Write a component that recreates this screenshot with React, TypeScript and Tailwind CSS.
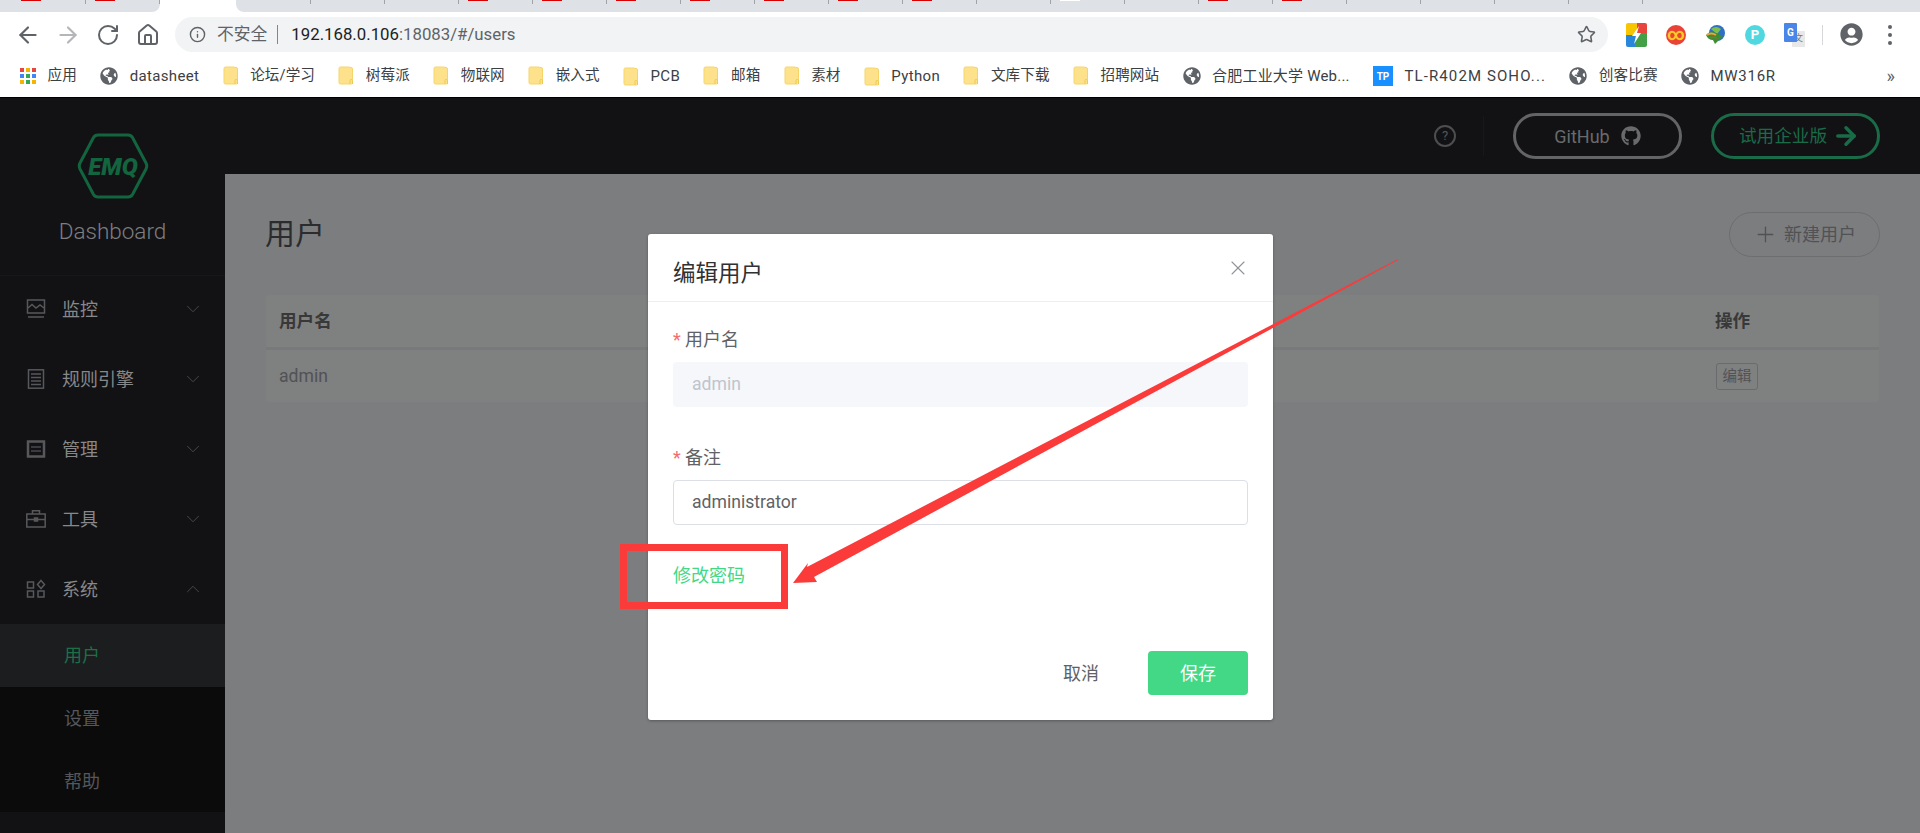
import { ArrowLeft, ArrowRight, ChevronDown, ChevronUp, Home, Info, Plus, RotateCw, Star, X } from 'lucide-react'
import { FaGithub, FaGlobeAmericas, FaUserCircle } from 'react-icons/fa'

const font = "font-['Roboto','Noto_Sans_CJK_SC',sans-serif]"

const leftTabs = [true, true]
const rightTabs = ['', '', '', 'r', 'r', 'r', 'r', 'r', 'r', 'r', '', 'w', '', 'r', 'r', '', '', '', '']

const cjk = 'text-[14.6px] tracking-[0.1px]'
const latin = 'text-[15px] tracking-[0.35px]'
const mixed = 'text-[15px] tracking-[0.2px]'
const caps = 'text-[15px] tracking-[0.75px]'
const capsWide = 'text-[15px] tracking-[1.1px]'

const bookmarks: { kind: 'apps' | 'globe' | 'folder' | 'tp'; label: string; cls: string }[] = [
  { kind: 'apps', label: '应用', cls: cjk },
  { kind: 'globe', label: 'datasheet', cls: latin },
  { kind: 'folder', label: '论坛/学习', cls: cjk },
  { kind: 'folder', label: '树莓派', cls: cjk },
  { kind: 'folder', label: '物联网', cls: cjk },
  { kind: 'folder', label: '嵌入式', cls: cjk },
  { kind: 'folder', label: 'PCB', cls: latin },
  { kind: 'folder', label: '邮箱', cls: cjk },
  { kind: 'folder', label: '素材', cls: cjk },
  { kind: 'folder', label: 'Python', cls: latin },
  { kind: 'folder', label: '文库下载', cls: cjk },
  { kind: 'folder', label: '招聘网站', cls: cjk },
  { kind: 'globe', label: '合肥工业大学 Web...', cls: mixed },
  { kind: 'tp', label: 'TL-R402M SOHO...', cls: capsWide },
  { kind: 'globe', label: '创客比赛', cls: cjk },
  { kind: 'globe', label: 'MW316R', cls: caps },
]

function Tab({ mark }: { mark: string }) {
  return (
    <div className="flex h-full w-[74px] shrink-0 items-start justify-between">
      <div className={mark === 'r' ? 'ml-[9px] h-px w-5 bg-[#d80000]' : mark === 'w' ? 'ml-[9px] h-px w-5 bg-white' : 'ml-[9px] h-px w-5'} />
      <div className="h-1 w-px bg-[#a0a3a8]" />
    </div>
  )
}

function AppsIcon() {
  const colors = ['#e8453c', '#f4b400', '#e8453c', '#4285f4', '#34a853', '#4285f4', '#f4b400', '#34a853', '#f4b400']
  return (
    <div className="grid h-4 w-4 grid-cols-3 gap-[2px]">
      {colors.map((c, i) => (
        <svg key={i} viewBox="0 0 4 4" className="h-full w-full">
          <rect width="4" height="4" fill={c} />
        </svg>
      ))}
    </div>
  )
}

function BookmarkIcon({ kind }: { kind: string }) {
  if (kind === 'apps') return <AppsIcon />
  if (kind === 'globe') return <FaGlobeAmericas className="h-[18px] w-[18px] text-[#5f6368]" />
  if (kind === 'tp')
    return (
      <div className="flex h-[20px] w-[20px] items-center justify-center bg-[#1890ff] text-[10px] font-bold tracking-normal text-white">TP</div>
    )
  return (
    <svg viewBox="0 0 16 19" className="h-[19px] w-4">
      <path d="M1 2.5Q1 1 2.5 1H10L13 1.5Q14.5 1.5 14.5 3V17Q14.5 18 13.5 18H2.5Q1 18 1 16.5Z" fill="#fee28b" stroke="#f5d56a" />
      <path d="M12 18V14.5Q12 13.5 13 13.5T14.5 14.5V18" fill="#fee28b" stroke="#eec94f" />
    </svg>
  )
}

function Extensions() {
  return (
    <div className="flex items-center gap-[19px]">
      <svg viewBox="0 0 21 24" className="h-6 w-[21px]">
        <path d="M2 0H11V12H0V2Q0 0 2 0Z" fill="#f7c600" />
        <path d="M11 0H19Q21 0 21 2V10H11Z" fill="#e8453c" />
        <path d="M0 12H9V24H2Q0 24 0 22Z" fill="#2a86d8" />
        <path d="M9 10H21V22Q21 24 19 24H9Z" fill="#43a047" />
        <path d="M13 3L6 13H10L8 21L15 10H11Z" fill="#fff" />
      </svg>
      <div className="flex h-5 w-5 items-center justify-center rounded-full bg-[#ea4335] text-[17px] leading-none font-bold text-[#ffca28]">∞</div>
      <svg viewBox="0 0 21 20" className="h-5 w-[21px]">
        <circle cx="12" cy="8" r="8" fill="#2f6fc4" />
        <path d="M6 4Q11 0 16 4L12 9Z" fill="#7cc04a" />
        <path d="M1 10Q5 5 11 8L18 11L10 19L8 15Q3 15 1 10Z" fill="#3a8f2e" />
        <path d="M2 10Q6 7 11 10" stroke="#f2a33a" strokeWidth="2" fill="none" />
        <path d="M4 13Q8 11 12 13" stroke="#e8453c" strokeWidth="1" fill="none" />
      </svg>
      <div className="flex h-5 w-5 items-center justify-center rounded-full bg-[#4fd8e0] text-[13px] font-bold text-white">P</div>
      <div className="relative h-[24px] w-[21px]">
        <div className="absolute right-0 bottom-0 flex h-[16px] w-[13px] items-center justify-center bg-[#e8e8e8] text-[9px] text-[#777]">文</div>
        <div className="absolute top-0 left-0 flex h-[19px] w-[13px] items-center justify-center rounded-[1px] bg-[#4a86e8] text-[10px] font-bold text-white">G</div>
      </div>
    </div>
  )
}

function ChromeBar() {
  return (
    <div className={`${font} shrink-0 bg-white`}>
      <div className="flex h-3">
        <div className="flex w-[160px] shrink-0 rounded-br-[8px] bg-[#dee1e6] pl-3">
          {leftTabs.map((_, i) => (
            <Tab key={i} mark="r" />
          ))}
        </div>
        <div className="w-[76px] shrink-0" />
        <div className="flex flex-1 overflow-hidden rounded-bl-[8px] bg-[#dee1e6] pl-px">
          {rightTabs.map((m, i) => (
            <Tab key={i} mark={m} />
          ))}
        </div>
      </div>
      <div className="flex h-[40px] items-center pt-[5px]">
        <div className="flex w-[175px] shrink-0 items-center gap-4 pl-4 text-[#5f6368]">
          <ArrowLeft className="-mx-px h-[26px] w-[26px]" />
          <ArrowRight className="-mx-px h-[26px] w-[26px] text-[#b4b6b9]" />
          <RotateCw className="h-6 w-6" />
          <Home className="h-6 w-6" />
        </div>
        <div className="flex h-[35px] w-[1433px] items-center rounded-full bg-[#f1f3f4] pl-[14px] text-[16.8px]">
          <Info className="h-[17px] w-[17px] text-[#5f6368]" />
          <span className="ml-[11px] text-[#5f6368]">不安全</span>
          <span className="ml-[10px] h-[19px] w-px bg-[#80868b]" />
          <span className="ml-[13px] text-[#202124]">192.168.0.106</span>
          <span className="text-[#5f6368]">:18083/#/users</span>
          <Star className="mr-[12px] ml-auto h-[19px] w-[19px] text-[#5f6368]" />
        </div>
        <div className="ml-[18px]">
          <Extensions />
        </div>
        <div className="mx-[17px] h-[20px] w-px bg-[#d5d7da]" />
        <FaUserCircle className="h-[23px] w-[23px] text-[#5f6368]" />
        <div className="ml-[25px] flex flex-col gap-[4px]">
          <div className="h-[4px] w-[4px] rounded-full bg-[#5f6368]" />
          <div className="h-[4px] w-[4px] rounded-full bg-[#5f6368]" />
          <div className="h-[4px] w-[4px] rounded-full bg-[#5f6368]" />
        </div>
      </div>
      <div className="flex h-[45px] items-center gap-[23.3px] pt-[3px] pl-5 text-[#3c4043]">
        {bookmarks.map((b, i) => (
          <div key={i} className="flex shrink-0 items-center gap-[11.5px] whitespace-nowrap">
            <BookmarkIcon kind={b.kind} />
            <span className={b.cls}>{b.label}</span>
          </div>
        ))}
        <span className="mr-[25px] ml-auto text-[18px] leading-none text-[#5f6368]">»</span>
      </div>
      <div className="h-px bg-black" />
    </div>
  )
}

function MenuIcon({ name }: { name: string }) {
  const cls = 'h-[20px] w-[20px] text-[#57585b]'
  if (name === 'monitor')
    return (
      <svg viewBox="0 0 20 20" className={cls} fill="none" stroke="currentColor" strokeWidth="1.5">
        <rect x="1.5" y="1" width="17" height="13" />
        <path d="M2 9L6 5.5L10 9L14 6L18 9" />
        <path d="M2 18H18" />
      </svg>
    )
  if (name === 'rule')
    return (
      <svg viewBox="0 0 20 20" className={cls} fill="none" stroke="currentColor" strokeWidth="1.5">
        <rect x="2.5" y="0.8" width="15" height="18.4" />
        <path d="M5 5H15M5 8.5H15M5 12H15M5 15.5H15" />
      </svg>
    )
  if (name === 'manage')
    return (
      <svg viewBox="0 0 20 20" className={cls} fill="none" stroke="currentColor">
        <rect x="2" y="2.500" width="16" height="15" strokeWidth="2.500" />
        <path d="M5 8H15M5 12H15" strokeWidth="1.500" opacity="0.8" />
      </svg>
    )
  if (name === 'tool')
    return (
      <svg viewBox="0 0 20 20" className={cls} fill="none" stroke="currentColor" strokeWidth="1.5">
        <rect x="0.8" y="5" width="18.4" height="13" />
        <path d="M6.5 5V1.8H13.5V5M1 10.5H8M12 10.5H19" />
        <rect x="8.5" y="9" width="3" height="3" fill="currentColor" />
      </svg>
    )
  return (
    <svg viewBox="0 0 20 20" className={cls} fill="none" stroke="currentColor" strokeWidth="1.5">
      <rect x="1.5" y="3" width="6" height="6" />
      <rect x="1.5" y="12" width="6" height="6" />
      <rect x="12" y="12" width="6" height="6" />
      <path d="M15 1.5L18.5 5.5L15 9.5L11.5 5.5Z" />
    </svg>
  )
}

function MenuRow({ icon, label, open }: { icon: string; label: string; open?: boolean }) {
  return (
    <div className="flex h-[70px] items-center pr-[21px] pl-[26px]">
      <MenuIcon name={icon} />
      <span className="ml-[16px] text-[18px] text-[#87888a]">{label}</span>
      {open ? (
        <ChevronUp strokeWidth={1} className="ml-auto h-[22px] w-[22px] text-[#4b4c4e]" />
      ) : (
        <ChevronDown strokeWidth={1} className="ml-auto h-[22px] w-[22px] text-[#4b4c4e]" />
      )}
    </div>
  )
}

function Sidebar() {
  return (
    <aside className="w-[225px] shrink-0 bg-[#121215]">
      <div className="flex h-[178px] flex-col items-center border-b border-[#18181b] pt-[35px]">
        <svg viewBox="0 0 72 66" className="h-[66px] w-[72px]">
          <path d="M21 2H51Q54 2 55.5 4.5L69 30Q70.500 33 69 36L55.500 61.500Q54 64 51 64H21Q18 64 16.500 61.500L3 36Q1.500 33 3 30L16.500 4.500Q18 2 21 2Z" fill="none" stroke="#12653f" strokeWidth="3" />
          <text x="36" y="42" textAnchor="middle" fontFamily="Roboto" fontStyle="italic" fontWeight="900" fontSize="24" fill="#12653f">EMQ</text>
        </svg>
        <div className="mt-[19px] text-[22.5px] leading-[26px] font-light text-[#7d7e80]">Dashboard</div>
      </div>
      <div className="-mt-[2px]">
        <MenuRow icon="monitor" label="监控" />
        <MenuRow icon="rule" label="规则引擎" />
        <MenuRow icon="manage" label="管理" />
        <MenuRow icon="tool" label="工具" />
        <MenuRow icon="system" label="系统" open />
      </div>
      <div className="bg-[#0b0b0c] text-[18px] text-[#56575a]">
        <div className="flex h-[63px] items-center bg-[#1c1d1f] pl-[64px] text-[#1c7048]">用户</div>
        <div className="flex h-[63px] items-center pl-[64px]">设置</div>
        <div className="flex h-[62px] items-center pl-[64px]">帮助</div>
      </div>
    </aside>
  )
}

function Header() {
  return (
    <header className="flex h-[76px] shrink-0 items-center justify-end bg-[#121215] pr-[40px]">
      <div className="flex h-[22px] w-[22px] items-center justify-center rounded-full border-2 border-[#4d4e50] text-[13px] text-[#55565a]">?</div>
      <div className="mr-[29px] ml-[27px] h-[40px] w-px bg-[#18181b]" />
      <div className="flex h-[46px] w-[169px] items-center justify-center gap-[11px] rounded-full border-[3px] border-[#636466] text-[18px] text-[#696a6c]">
        GitHub <FaGithub className="h-[20px] w-[20px]" />
      </div>
      <div className="ml-[29px] flex h-[46px] w-[169px] items-center gap-[5px] rounded-full border-[3px] border-[#1a6b47] pl-[25px] text-[17.6px] text-[#1a6b47]">
        试用企业版
        <ArrowRight strokeWidth={3} className="h-[28px] w-[28px]" />
      </div>
    </header>
  )
}

function Content() {
  return (
    <div className="flex-1 bg-[#7c7d7f] pt-[38px] pr-[40px] pl-[41px]">
      <div className="flex h-[45px] items-center justify-between">
        <h1 className="-mt-[2px] -ml-px text-[30px] text-[#2b2c2e]">用户</h1>
        <div className="flex h-[45px] w-[151px] items-center justify-center gap-[6px] rounded-full border border-[#6d6e70] text-[18px] text-[#515255]">
          <Plus strokeWidth={1.25} className="h-[25px] w-[25px]" />
          新建用户
        </div>
      </div>
      <div className="mt-[38px] mr-px h-[107px] overflow-hidden rounded-[3px] bg-[#7f8080]">
        <div className="flex h-[55px] items-center justify-between border-b-[3px] border-[#78797a] pl-[13px] text-[17.6px] font-bold text-[#383839]">
          <span>用户名</span>
          <span className="w-[164px]">操作</span>
        </div>
        <div className="flex h-[52px] items-center justify-between pl-[13px] text-[17.6px] text-[#515255]">
          <span>admin</span>
          <span className="w-[164px]">
            <span className="ml-px inline-flex h-[27px] w-[42px] items-center justify-center rounded-[3px] border border-[#6a6b6d] text-[14.500px]">编辑</span>
          </span>
        </div>
      </div>
    </div>
  )
}

function Field({ label, value, disabled }: { label: string; value: string; disabled?: boolean }) {
  return (
    <div>
      <div className="flex h-[26px] items-center text-[18px] text-[#606266]">
        <span className="mr-[5px] w-[7px] text-[#f56c6c]">*</span>
        {label}
      </div>
      <div
        className={
          disabled
            ? 'mt-[10px] flex h-[45px] items-center rounded-[4px] bg-[#f5f7fa] pl-[19px] text-[17.6px] text-[#c0c4cc]'
            : 'mt-[10px] flex h-[45px] items-center rounded-[4px] border border-[#dcdfe6] pl-[18px] text-[17.6px] text-[#606266]'
        }
      >
        {value}
      </div>
    </div>
  )
}

function EditDialog() {
  return (
    <div className="absolute top-[234px] left-[648px] flex h-[486px] w-[625px] flex-col rounded-[3px] bg-white shadow-[0_1px_3px_rgba(0,0,0,0.3)]">
      <div className="flex h-[68px] shrink-0 items-center justify-between border-b border-[#ebeef5] pr-[23px] pl-[25px]">
        <span className="pt-[12px] text-[22.5px] text-[#303133]">编辑用户</span>
        <X strokeWidth={1.1} className="h-6 w-6 text-[#909399]" />
      </div>
      <div className="flex flex-1 flex-col px-[25px] pt-[24px] pb-[25px]">
        <Field label="用户名" value="admin" disabled />
        <div className="mt-[37px]">
          <Field label="备注" value="administrator" />
        </div>
        <div className="mt-[37px] flex h-[26px] items-center text-[18px] text-[#42d885]">修改密码</div>
        <div className="mt-auto flex items-center justify-end">
          <span className="mr-[49px] text-[18px] text-[#606266]">取消</span>
          <div className="flex h-[44px] w-[100px] items-center justify-center rounded-[4px] bg-[#42d885] text-[18px] text-white">保存</div>
        </div>
      </div>
    </div>
  )
}

export default function App() {
  return (
    <div className={`${font} relative flex h-[833px] w-[1920px] flex-col overflow-hidden`}>
      <ChromeBar />
      <div className="flex min-h-0 flex-1">
        <Sidebar />
        <main className="flex min-w-0 flex-1 flex-col">
          <Header />
          <Content />
        </main>
      </div>
      <EditDialog />
      <div className="absolute top-[544px] left-[620px] h-[65px] w-[168px] border-[7px] border-[#fb3a3a]" />
      <svg viewBox="0 0 1920 833" className="pointer-events-none absolute top-0 left-0 h-[833px] w-[1920px]">
        <polygon points="1398,259 1398,260 814,577 817,582 793,583 808,563 807,567" fill="#fb3a3a" />
      </svg>
    </div>
  )
}
